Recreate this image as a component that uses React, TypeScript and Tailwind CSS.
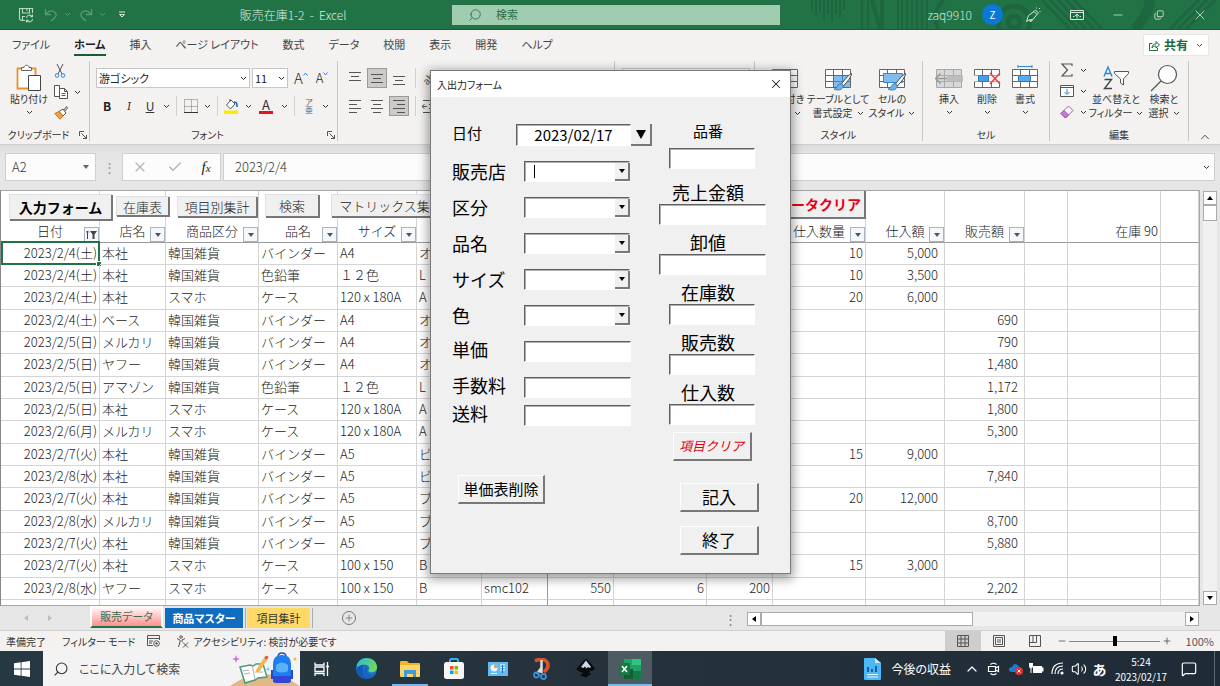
import React from "react";
import {
  Search, X, Check, Minus, Copy, Plus, ChevronUp, Volume2, MessageSquare, Accessibility,
} from "lucide-react";

/* ---------- shared bits ---------- */

const Chev = ({ className = "" }: { className?: string }) => (
  <svg viewBox="0 0 7 5" className={`h-[5px] w-[7px] shrink-0 ${className}`} fill="none" stroke="currentColor">
    <path d="M1 1l2.5 2.5L6 1" />
  </svg>
);

const Launcher = () => (
  <button aria-label="詳細" className="flex w-3 justify-center text-[#555]">
    <svg viewBox="0 0 8 8" className="h-2 w-2" fill="none" stroke="currentColor">
      <path d="M.5 5V.5H5M2.5 2.5l5 5M7.5 4v3.500H4" />
    </svg>
  </button>
);

const Sep = () => <span className="mx-1 h-5 w-px shrink-0 bg-[#d0d0d0]" />;

function Group({ label = "", className, launcher, children }: {
  label?: string; className: string; launcher?: boolean; children?: React.ReactNode;
}) {
  return (
    <section className={`flex h-20 shrink-0 flex-col border-r border-[#c8c6c4] ${className}`}>
      <div className="flex min-h-0 flex-1">{children}</div>
      <div className="flex h-3 items-center text-[10px] leading-3">
        <span className="flex-1 text-center">{label}</span>
        {launcher && <Launcher />}
      </div>
    </section>
  );
}

function BigButton({ icon, lines, className, inline }: {
  icon: React.ReactNode; lines: string[]; className: string; inline?: boolean;
}) {
  return (
    <button className={`flex shrink-0 flex-col items-center pt-1 text-[10px] leading-[14px] ${className}`}>
      <span className="mb-px flex h-[26px] items-center">{icon}</span>
      {lines.map((l, i) => (
        <span key={l} className="flex items-center gap-1 whitespace-nowrap">
          {l}
          {inline && i === lines.length - 1 && <Chev />}
        </span>
      ))}
      {!inline && <Chev className="mt-1" />}
    </button>
  );
}

/* ---------- title bar ---------- */

function TitleBar() {
  return (
    <header className="relative flex h-[30px] shrink-0 items-center border-b border-[#185c37] bg-[#217346] text-[11px] text-[#d3e8dc]">
      <svg className="absolute right-0 top-0 h-[29px] w-[410px]" viewBox="0 0 410 29" fill="none" stroke="#1d6640">
        <path strokeWidth="2" d="M2 0v12M6 0v16M10 0v12M14 0v20M18 0v14M22 0v22M26 0v14M30 0v18M34 0v10M52 0v29M58 0v29M88 0v29M92 0v29M97 0v29M102 0v29M107 0v29M112 0v29M117 0v29" />
        <path strokeWidth="4" d="M62 0l8 29M72 0v29M128 29a24 24 0 0 1 6-29" />
        <circle cx="204" cy="22" r="6" strokeWidth="5" />
        <circle cx="204" cy="22" r="16" strokeWidth="5" />
        <path strokeWidth="3" d="M232 0l28 29M240 0l28 29M248 0l28 29M256 0l28 29M264 0l28 29M360 29l29-29M368 29l29-29M376 29l29-29" />
        <path strokeWidth="10" d="M340 0q-2 18-16 29" />
      </svg>
      <div className="relative flex flex-1 items-center pl-3">
        <button aria-label="上書き保存" className="ml-1.5 w-4">
          <svg viewBox="0 0 16 16" className="h-4 w-4" fill="none" stroke="#b5dbc5" strokeWidth="1.100">
            <path d="M7 13.500H3L1.500 12V1.500h13V6M4.500 1.500V6h7V1.500M4.500 13.500V9.500H7M9 1.500V4" />
            <path d="M8.500 11a3 3 0 0 1 5.500-1.500M14.500 7.500v2.300h-2.300M14.500 12a3 3 0 0 1-5.500 1.500M8.500 15.500v-2.300h2.300" />
          </svg>
        </button>
        <button aria-label="元に戻す" className="ml-2.5 flex items-center gap-1.5 text-[#5b9a78]">
          <svg viewBox="0 0 14 14" className="h-3.5 w-3.5" fill="none" stroke="currentColor" strokeWidth="1.300"><path d="M1.500 1v5.500H7M2 6C4 3.500 7 2 10 3.500c3 2 2.500 4.500.5 6.500L7 13" /></svg>
          <Chev />
        </button>
        <button aria-label="やり直し" className="ml-2 flex items-center gap-1.5 text-[#5b9a78]">
          <svg viewBox="0 0 14 14" className="h-3.5 w-3.5 -scale-x-100" fill="none" stroke="currentColor" strokeWidth="1.300"><path d="M1.500 1v5.500H7M2 6C4 3.500 7 2 10 3.500c3 2 2.500 4.500.5 6.500L7 13" /></svg>
          <Chev />
        </button>
        <button aria-label="クイック アクセス ツール バーのユーザー設定" className="ml-3 text-[#d3e8dc]">
          <svg viewBox="0 0 8 8" className="h-2 w-2" fill="none" stroke="currentColor"><path d="M1 1h6M1.500 3.500h5L4 6z" /></svg>
        </button>
        <h1 className="flex-1 pl-7 text-center text-[12px] font-light text-[#dcefe4]">販売在庫1-2&nbsp; -&nbsp; Excel</h1>
      </div>
      <label className="relative mx-5 flex h-5 w-[328px] items-center bg-[#a0cdb0] text-[#2c6e4a]">
        <Search className="ml-4 h-3.5 w-3.5 -scale-x-100" strokeWidth={1.500} />
        <input aria-label="検索" placeholder="検索" className="ml-3.5 w-40 bg-transparent text-[11px] outline-none placeholder:text-[#2c6e4a]" />
      </label>
      <div className="relative flex flex-1 items-center justify-end">
        <span className="mr-2.5 text-[12px] font-light">zaq9910</span>
        <span className="mr-4 flex h-[21px] w-[21px] items-center justify-center rounded-full bg-[#0b78d4] text-[10px] text-white">Z</span>
        <button aria-label="近日公開の機能" className="flex w-7 justify-center">
          <svg viewBox="0 0 16 16" className="h-4 w-4" fill="none" stroke="currentColor"><path d="M1.500 14.500l2-6L9 4.500 12 7.500 8 12.500l-4 .500zM9 4.500l1.500-1.500 3 3L12 7.500M11.500.500v1M15 1l-1 1M15.500 4.500h-1M5 12.500v2l2-.5v-1.500" /></svg>
        </button>
        <button aria-label="リボンの表示オプション" className="ml-2.5 flex w-10 justify-center">
          <svg viewBox="0 0 14 10" className="h-2.5 w-3.5" fill="none" stroke="currentColor"><path d="M.5.5h13v9H.5zM.5 2.500h13M7 8.500V4M5 6l2-2 2 2M3 6.500h1.500M9.500 6.500H11" /></svg>
        </button>
        <button aria-label="最小化" className="flex w-[41px] justify-center"><Minus className="h-3.5 w-3.5" strokeWidth={1.300} /></button>
        <button aria-label="元に戻す (縮小)" className="flex w-[41px] justify-center"><Copy className="h-2.5 w-2.5 -scale-y-100" strokeWidth={2} /></button>
        <button aria-label="閉じる" className="flex w-[41px] justify-center"><X className="h-4 w-4" strokeWidth={1.300} /></button>
      </div>
    </header>
  );
}

/* ---------- ribbon ---------- */

const TABS = ["ファイル", "ホーム", "挿入", "ページ レイアウト", "数式", "データ", "校閲", "表示", "開発", "ヘルプ"];

function TabStrip() {
  return (
    <nav className="flex h-[30px] shrink-0 items-center text-[11px] text-[#444]">
      {TABS.map((t) =>
        t === "ホーム" ? (
          <a key={t} href="#home" className="mx-3 border-b-2 border-[#185c37] font-bold leading-5 text-[#222]">{t}</a>
        ) : (
          <a key={t} href="#tab" className="mx-3 border-b-2 border-transparent leading-5">{t}</a>
        )
      )}
      <button className="ml-auto mr-3 flex h-5 w-16 items-center justify-center gap-1 whitespace-nowrap bg-white text-[12px] font-bold text-[#1b6b3e] shadow-[0_0_1px_#aaa]">
        <svg viewBox="0 0 11 11" className="h-[11px] w-[11px]" fill="none" stroke="currentColor"><path d="M3.500 3.500h-3v7h8V8M3 8c0-3 2-4 4-4V1.500L10.500 5 7 8V6C5 6 4 6.500 3 8z" /></svg>
        共有
        <Chev className="ml-1" />
      </button>
    </nav>
  );
}

const AlignIcon = ({ d }: { d: string }) => (
  <svg viewBox="0 0 14 14" className="h-3.5 w-3.5" fill="none" stroke="#555"><path d={d} /></svg>
);

function AlignButton({ d, name, on }: { d: string; name: string; on?: boolean }) {
  return (
    <button aria-label={name} className={`flex h-5 w-5 items-center justify-center border ${on ? "border-[#9a9a9a] bg-[#cdcbc9]" : "border-transparent"}`}>
      <AlignIcon d={d} />
    </button>
  );
}

const GridBase = ({ children, dim }: { children?: React.ReactNode; dim?: boolean }) => (
  <svg viewBox="0 0 28 26" className="h-[26px] w-7" fill="none">
    <path d="M1.500 4.500h25v18h-25z" fill={dim ? "#d8d8d8" : "#fff"} stroke={dim ? "#a8a8a8" : "#666"} />
    <path d="M1.500 10.500h25M1.500 16.500h25M9.500 4.500v18M18.500 4.500v18" stroke={dim ? "#a8a8a8" : "#666"} />
    {children}
  </svg>
);

const Brush = () => (
  <>
    <path d="M27.500 8.500Q24 10 17.500 19l2 2Q26 14 28 9z" fill="#fff" stroke="#444" />
    <path d="M17 18.500c-3 0-3.500 3-5 4.500-1 1-2 1-2 1 4 2 8.500 1 9.500-3z" fill="#6db2ee" stroke="#1f6db0" strokeWidth=".8" />
  </>
);

function Ribbon() {
  return (
    <div className="flex h-[84px] shrink-0 pt-px text-[#333]">
      <Group label="クリップボード" className="w-[90px]" launcher>
        <BigButton
          className="w-[54px] pl-1"
          lines={["貼り付け"]}
          icon={
            <svg viewBox="0 0 26 28" className="h-7 w-[26px]" fill="none">
              <path d="M1.500 4.500h18v20h-18z" fill="#fff" stroke="#e8912d" strokeWidth="1.800" />
              <path d="M5.500 6.500v-3h2.500c0-3 5-3 5 0h2.500v3z" fill="#fff" stroke="#666" />
              <path d="M12.500 11.500h12v15h-12z" fill="#fff" stroke="#444" />
            </svg>
          }
        />
        <div className="flex flex-col gap-[7px] pt-[3px]">
          <button aria-label="切り取り">
            <svg viewBox="0 0 12 14" className="h-3.5 w-3" fill="none"><path d="M3 0l5 10M9 0L4 10" stroke="#555" /><circle cx="3" cy="11.500" r="1.800" stroke="#2b88d8" /><circle cx="9" cy="11.500" r="1.800" stroke="#2b88d8" /></svg>
          </button>
          <button aria-label="コピー" className="flex items-center gap-1.5">
            <svg viewBox="0 0 14 14" className="h-3.5 w-3.5" fill="#fff" stroke="#555"><path d="M.5.5h5v11h-5zM5.500 3.500h5l3 3v7h-8zM10.500 3.500v3h3M7.500 8.500h4M7.500 10.500h4" /></svg>
            <Chev />
          </button>
          <button aria-label="書式のコピー/貼り付け">
            <svg viewBox="0 0 14 14" className="h-3.5 w-3.5" fill="none"><path d="M9 5l3.500-4.500L13.500 2 10 6z" stroke="#555" /><path d="M5 5.500l4-2.500 3 4-3 3z" fill="#fff" stroke="#555" /><path d="M5 5.500L.8 7.500 6 13.200l3-3.200z" fill="#f0a040" stroke="#d07818" /></svg>
          </button>
        </div>
      </Group>

      <Group label="フォント" className="w-[248px]" launcher>
        <div className="flex flex-col pl-1.5 pt-[7px]">
          <div className="flex h-5 items-center text-[11px] text-[#222]">
            <button aria-label="フォント名" className="flex h-5 w-[154px] items-center justify-between border border-[#c8c6c4] bg-white px-0.5">游ゴシック<Chev /></button>
            <button aria-label="フォント サイズ" className="ml-0.5 flex h-5 w-9 items-center justify-between border border-[#c8c6c4] bg-white px-0.5">11<Chev /></button>
            <button aria-label="フォント サイズの拡大" className="ml-1.5 flex items-start text-[15px] font-light leading-5">A<svg viewBox="0 0 5 4" className="mt-1 h-1 w-[5px]" fill="none" stroke="#2b88d8"><path d="M.5 3.500l2-2.500 2 2.500" /></svg></button>
            <button aria-label="フォント サイズの縮小" className="ml-2 flex items-start text-[13px] font-light leading-5">A<svg viewBox="0 0 5 4" className="mt-1 h-1 w-[5px]" fill="none" stroke="#2b88d8"><path d="M.5.5l2 2.500 2-2.500" /></svg></button>
          </div>
          <div className="mt-2 flex h-5 items-center text-[12px]">
            <button className="w-[22px] font-bold text-[#222]">B</button>
            <button className="w-[22px] font-serif italic">I</button>
            <button className="w-5 underline">U</button>
            <button aria-label="下線の種類" className="flex w-3 justify-center"><Chev /></button>
            <Sep />
            <button aria-label="罫線" className="flex w-5 justify-center">
              <svg viewBox="0 0 14 14" className="h-3.5 w-3.5" fill="none" stroke="#777"><path d="M.5.5h13v13H.5zM7.500 .5v13M.5 7.500h13" strokeDasharray="1 1" /><path d="M0 13.500h14" stroke="#333" /></svg>
            </button>
            <button aria-label="罫線の種類" className="flex w-3 justify-center"><Chev /></button>
            <Sep />
            <button aria-label="塗りつぶしの色" className="flex w-5 justify-center">
              <svg viewBox="0 0 16 16" className="h-4 w-4" fill="none"><path d="M0 12.500h14V16H0z" fill="#ffeb00" /><path d="M2.500 7L7 2l4 4-4.500 5zM6 3.500V1" stroke="#555" fill="#fff" /><path d="M10 4c3 0 3 2 3 5" stroke="#1d5fa8" strokeWidth="1.500" /></svg>
            </button>
            <button aria-label="塗りつぶしの色の一覧" className="flex w-3 justify-center"><Chev /></button>
            <button aria-label="フォントの色" className="flex w-6 flex-col items-center text-[13px] leading-[13px]">A<span className="h-[3px] w-3.5 bg-[#e81123]" /></button>
            <button aria-label="フォントの色の一覧" className="flex w-3 justify-center"><Chev /></button>
            <Sep />
            <button aria-label="ふりがなの表示" className="flex w-5 flex-col items-center text-[8px] leading-2 text-[#666]"><span>ア</span><span>亜</span></button>
            <button aria-label="ふりがなの設定" className="flex w-3 justify-center"><Chev /></button>
          </div>
        </div>
      </Group>

      <Group className="w-[277px]">
        <div className="flex flex-col gap-2 pl-[7px] pt-[7px]">
          <div className="flex h-5 items-center gap-0.5">
            <AlignButton name="上揃え" d="M1 1.500h12M3 5.500h8M1 9.500h12" />
            <AlignButton name="上下中央揃え" on d="M1 3.500h12M3 7.500h8M1 11.500h12" />
            <AlignButton name="下揃え" d="M1 5.500h12M3 9.500h8M1 13.500h12" />
            <Sep />
            <button aria-label="方向" className="-rotate-45 text-[10px] text-[#555]">ab</button>
          </div>
          <div className="flex h-5 items-center gap-0.5">
            <AlignButton name="左揃え" d="M1 1.500h12M1 5.500h8M1 9.500h12M1 13.500h8" />
            <AlignButton name="中央揃え" d="M1 1.500h12M3 5.500h8M1 9.500h12M3 13.500h8" />
            <AlignButton name="右揃え" on d="M1 1.500h12M5 5.500h8M1 9.500h12M5 13.500h8" />
            <Sep />
            <AlignIcon d="M1 1.500h12M7 5.500h6M7 9.500h6M1 13.500h12M5 7.500H0M2.500 5L0 7.500 2.500 10" />
          </div>
        </div>
      </Group>

      <Group className="w-[140px]">
        <div className="p-[7px]"><div className="h-5 w-32 border border-[#c8c6c4] bg-white" /></div>
      </Group>

      <Group label="スタイル" className="w-[168px]">
        <BigButton className="w-[60px]" inline lines={["条件付き", "書式"]} icon={<GridBase><path d="M2 4h16v6H2z" fill="#e84c4c" /><path d="M2 11h12v5H2z" fill="#8cc4ee" /></GridBase>} />
        <BigButton className="w-[46px]" inline lines={["テーブルとして", "書式設定"]} icon={<GridBase><path d="M10 11h16v11H10z" fill="#83bdf0" /><path d="M10 16.500h16M18.500 11v11" stroke="#3a86c8" /><Brush /></GridBase>} />
        <BigButton className="w-[62px]" inline lines={["セルの", "スタイル"]} icon={<GridBase><path d="M5.500 8.500h19v9h-19z" fill="#83bdf0" stroke="#3a86c8" /><Brush /></GridBase>} />
      </Group>

      <Group label="セル" className="w-[127px]">
        <BigButton className="ml-[7px] w-[38px]" lines={["挿入"]} icon={<GridBase dim><path d="M12 10.500h16v6H12z" fill="#bdbdbd" /><path d="M12 13.500H1M5.500 8.500l-5 5 5 5" stroke="#999" strokeWidth="1.500" /></GridBase>} />
        <BigButton className="w-[38px]" lines={["削除"]} icon={<GridBase><path d="M0 10.500h28v6H0z" fill="#f3f2f1" /><path d="M5.500 10.500h10v6h-10z" fill="#4a9ee8" stroke="#2d79bd" /><path d="M17 8l10 11M27 8L17 19" stroke="#e84040" strokeWidth="1.500" /></GridBase>} />
        <BigButton className="w-[38px]" lines={["書式"]} icon={<GridBase><path d="M7.500 10.500h12v6h-12z" fill="#5aa8ec" stroke="#2d79bd" /><path d="M7 1.500h14M7 0v3M21 0v3" stroke="#2b88d8" /></GridBase>} />
      </Group>

      <Group label="編集" className="w-[139px]">
        <div className="flex w-[38px] flex-col gap-[7px] pl-2.5 pt-0.5">
          <button aria-label="オート SUM" className="flex items-center gap-1.5">
            <svg viewBox="0 0 14 14" className="h-3.5 w-3.5 shrink-0" fill="none" stroke="#555" strokeWidth="1.200"><path d="M12 3V1H2l5.500 6L2 13h10v-2" /></svg><Chev />
          </button>
          <button aria-label="フィル" className="flex items-center gap-1.5">
            <svg viewBox="0 0 14 14" className="h-3.5 w-3.5 shrink-0" fill="#fff" stroke="#555"><path d="M.5 1.500h13v11H.5zM.5 3.500h13" /><path d="M7 5v5M4.500 8L7 10.500 9.500 8" stroke="#2b88d8" fill="none" /></svg><Chev />
          </button>
          <button aria-label="クリア" className="flex items-center gap-1.5">
            <svg viewBox="0 0 14 14" className="h-3.5 w-3.5 shrink-0"><path d="M1 8.500L8.500 1 13 5.500 5.500 13z" fill="#fff" stroke="#a34fb0" /><path d="M1 8.500L4 5.500 8.500 10l-3 3z" fill="#c87ad4" stroke="#a34fb0" /></svg><Chev />
          </button>
        </div>
        <BigButton className="w-14" inline lines={["並べ替えと", "フィルター"]} icon={
          <svg viewBox="0 0 26 26" className="h-[26px] w-[26px]" fill="none">
            <path d="M1 11.500L5 2l4 9.500M2.500 8.500h5" stroke="#2b88d8" strokeWidth="1.400" />
            <path d="M1.500 14.500h7l-7 9h7.500" stroke="#444" strokeWidth="1.400" />
            <path d="M11.500 6.500h14v2l-5 5.500v6l-3 -2v-4l-6-5.500z" stroke="#555" fill="#fff" />
          </svg>} />
        <BigButton className="w-10" inline lines={["検索と", "選択"]} icon={
          <svg viewBox="0 0 28 28" className="h-7 w-7" fill="none" stroke="#555" strokeWidth="1.200"><circle cx="17.500" cy="10.500" r="9" fill="#fff" /><path d="M11 17L1 27" /></svg>} />
      </Group>
      <button aria-label="リボンを折りたたむ" className="flex flex-1 items-end justify-center"><ChevronUp className="h-3.5 w-3.5" strokeWidth={1.500} /></button>
    </div>
  );
}

/* ---------- formula bar ---------- */

function FormulaBar() {
  return (
    <div className="flex h-[46px] shrink-0 items-start border-t border-[#cfcfcf] bg-gradient-to-b from-[#dcdcdc] to-[#e6e6e6] to-20% px-[5px] pt-2 text-[13px] font-light text-[#333]">
      <button aria-label="名前ボックス" className="flex h-7 w-[91px] items-center justify-between border border-[#cfcfcf] bg-[#fcfcfc] px-1.5">
        A2
        <svg viewBox="0 0 6 4" className="h-1 w-1.5"><path d="M0 0h6L3 4z" fill="#666" /></svg>
      </button>
      <span className="flex h-7 w-[26px] items-center justify-center text-[#999]">⋮</span>
      <div className="flex h-7 w-[99px] items-center justify-around border border-[#cfcfcf] bg-[#fcfcfc]">
        <button aria-label="キャンセル"><X className="h-4 w-4 text-[#b5b5b5]" strokeWidth={1.800} /></button>
        <button aria-label="入力"><Check className="h-4 w-4 text-[#b5b5b5]" strokeWidth={2.200} /></button>
        <button aria-label="関数の挿入" className="font-['Liberation_Serif',serif] text-[15px] font-normal italic text-[#222]">f<span className="text-[11px]">x</span></button>
      </div>
      <div className="ml-0.5 flex h-7 flex-1 items-center border border-[#cfcfcf] bg-[#fcfcfc] pl-[11px] pr-1">
        <input aria-label="数式バー" defaultValue="2023/2/4" className="flex-1 bg-transparent outline-none" />
        <Chev />
      </div>
    </div>
  );
}

/* ---------- worksheet ---------- */

const COLS = [
  { w: "w-[99px]", h: "日付", f: "sorted" },
  { w: "w-[66px]", h: "店名", f: "menu" },
  { w: "w-[93px]", h: "商品区分", f: "menu" },
  { w: "w-[79px]", h: "品名", f: "menu" },
  { w: "w-[79px]", h: "サイズ", f: "menu" },
  { w: "w-[65px]", h: "", f: "" },
  { w: "w-[66px]", h: "", f: "" },
  { w: "w-[66px]", h: "", f: "" },
  { w: "w-[93px]", h: "", f: "" },
  { w: "w-[66px]", h: "", f: "" },
  { w: "w-[93px]", h: "仕入数量", f: "menu" },
  { w: "w-[79px]", h: "仕入額", f: "menu" },
  { w: "w-[80px]", h: "販売額", f: "menu" },
  { w: "w-[43px]", h: "", f: "" },
  { w: "w-[93px]", h: "在庫 90", f: "" },
  { w: "w-auto", h: "", f: "" },
];

const KB = "韓国雑貨";
const ROWS: string[][] = [
  ["2023/2/4(土)", "本社", KB, "バインダー", "A4", "オ", "", "", "", "", "10", "5,000", ""],
  ["2023/2/4(土)", "本社", KB, "色鉛筆", "１２色", "L", "", "", "", "", "10", "3,500", ""],
  ["2023/2/4(土)", "本社", "スマホ", "ケース", "120 x 180A", "A", "", "", "", "", "20", "6,000", ""],
  ["2023/2/4(土)", "ベース", KB, "バインダー", "A4", "オ", "", "", "", "", "", "", "690"],
  ["2023/2/5(日)", "メルカリ", KB, "バインダー", "A4", "オ", "", "", "", "", "", "", "790"],
  ["2023/2/5(日)", "ヤフー", KB, "バインダー", "A4", "オ", "", "", "", "", "", "", "1,480"],
  ["2023/2/5(日)", "アマゾン", KB, "色鉛筆", "１２色", "L", "", "", "", "", "", "", "1,172"],
  ["2023/2/5(日)", "本社", "スマホ", "ケース", "120 x 180A", "A", "", "", "", "", "", "", "1,800"],
  ["2023/2/6(月)", "メルカリ", "スマホ", "ケース", "120 x 180A", "A", "", "", "", "", "", "", "5,300"],
  ["2023/2/7(火)", "本社", KB, "バインダー", "A5", "ビ", "", "", "", "", "15", "9,000", ""],
  ["2023/2/8(水)", "本社", KB, "バインダー", "A5", "ビ", "", "", "", "", "", "", "7,840"],
  ["2023/2/7(火)", "本社", KB, "バインダー", "A5", "ブ", "", "", "", "", "20", "12,000", ""],
  ["2023/2/8(水)", "メルカリ", KB, "バインダー", "A5", "ブ", "", "", "", "", "", "", "8,700"],
  ["2023/2/7(火)", "本社", KB, "バインダー", "A5", "ブ", "", "", "", "", "", "", "5,880"],
  ["2023/2/7(火)", "本社", "スマホ", "ケース", "100 x 150", "B", "", "", "", "", "15", "3,000", ""],
  ["2023/2/8(水)", "ヤフー", "スマホ", "ケース", "100 x 150", "B", "smc102", "550", "6", "200", "", "", "2,202"],
  [],
];

function cellAlign(c: number) {
  if (c === 0) return "text-right pr-0.5";
  if (c === 11 || c === 12) return "text-right pr-1.5";
  if (c >= 7) return "text-right pr-0.5";
  return "pl-0.5";
}

const FilterButton = ({ kind, name }: { kind: string; name: string }) => (
  <button aria-label={`${name} フィルター`} className="absolute bottom-0 right-0 flex h-[15px] w-[15px] items-center justify-center border border-[#a9b4c2] bg-[#f4f7fb]">
    {kind === "sorted" ? (
      <svg viewBox="0 0 11 9" className="h-[9px] w-[11px]"><path d="M1.500 9V1M0 2.500L1.500 1 3 2.500" stroke="#444" fill="none" /><path d="M4 1h7L8.500 4.500V9h-2V4.500z" fill="#444" /></svg>
    ) : (
      <svg viewBox="0 0 6 4" className="h-1 w-1.5"><path d="M0 0h6L3 4z" fill="#555" /></svg>
    )}
  </button>
);

function MacroButton({ className, children }: { className: string; children: React.ReactNode }) {
  return (
    <button className={`shrink-0 overflow-hidden whitespace-nowrap border-b-2 border-r-2 border-[#777] bg-[#f0f0f0] text-center shadow-[-1px_-1px_0_#e0e0e0] ${className}`}>
      {children}
    </button>
  );
}

const ArrowBox = ({ d, name, className = "" }: { d: string; name: string; className?: string }) => (
  <button aria-label={name} className={`flex h-3.5 w-3.5 shrink-0 items-center justify-center border border-[#aaa] bg-white ${className}`}>
    <svg viewBox="0 0 6 6" className="h-1.5 w-1.5"><path d={d} fill="#000" /></svg>
  </button>
);

function Sheet() {
  return (
    <main className="flex min-h-0 flex-1 bg-[#e6e6e6]">
      <div className="relative min-w-0 flex-1 overflow-hidden border border-[#a6a6a6] border-l-[#888] bg-white">
        <table className="w-full table-fixed border-separate border-spacing-0 text-[13px] font-light leading-4 text-[#222]">
          <colgroup>{COLS.map((c, i) => <col key={i} className={c.w} />)}</colgroup>
          <thead>
            <tr className="h-[52px]">
              {COLS.map((c, i) => (
                <th key={i} className={`relative whitespace-nowrap border-b border-r border-b-[#9a9a9a] p-0 pb-[3px] align-bottom font-light ${i === 6 ? "border-r-[#9a9a9a]" : "border-r-[#d4d4d4]"} ${i === 14 ? "pr-0.5 text-right" : "text-center"}`}>
                  {c.h}
                  {c.f && <FilterButton kind={c.f} name={c.h} />}
                </th>
              ))}
            </tr>
          </thead>
          <tbody className="[&>tr:nth-child(3n)]:h-[23px]">
            {ROWS.map((r, ri) => (
              <tr key={ri} className="h-[22px]">
                {COLS.map((_, ci) => (
                  <td key={ci} className={`relative overflow-visible whitespace-nowrap border-b border-r border-b-[#d4d4d4] pt-0 pb-0.5 ${ci === 6 ? "border-r-[#9a9a9a]" : "border-r-[#d4d4d4]"} ${cellAlign(ci)}`}>
                    {r[ci] ?? ""}
                    {ri === 0 && ci === 0 && (
                      <span className="pointer-events-none absolute -top-0.5 -bottom-px -right-px left-0 border-2 border-[#217346]">
                        <span className="absolute -bottom-[3px] -right-[3px] h-[5px] w-[5px] border-l border-t border-white bg-[#217346]" />
                      </span>
                    )}
                  </td>
                ))}
              </tr>
            ))}
          </tbody>
        </table>
        <div className="absolute left-[9px] top-0 flex items-start text-[14px] font-light leading-[19px] text-[#222]">
          <MacroButton className="mt-1 h-[26px] w-[103px] text-[14px] font-bold leading-6 text-black">入力フォーム</MacroButton>
          <MacroButton className="ml-1 mt-1.5 h-5 w-[53px] text-[13px]">在庫表</MacroButton>
          <MacroButton className="ml-2 mt-1.5 h-[21px] w-[80px] text-[13px]">項目別集計</MacroButton>
          <MacroButton className="ml-2 mt-1 h-[23px] w-[54px] text-[13px]">検索</MacroButton>
          <MacroButton className="ml-3 mt-1 h-[23px] w-[120px] text-[13px]">マトリックス集計</MacroButton>
          <MacroButton className="ml-[314px] h-7 w-[100px] pl-2 text-[14px] font-bold leading-6 text-[#e60012]">データクリア</MacroButton>
        </div>
      </div>
      <div className="flex w-5 flex-col items-center py-px">
        <ArrowBox name="上へスクロール" d="M0 5h6L3 1z" />
        <span className="h-4 w-3.5 border border-[#aaa] bg-white" />
        <span className="w-3.5 flex-1 bg-[#f1f1f1]" />
        <ArrowBox name="下へスクロール" d="M0 1h6L3 5z" />
      </div>
    </main>
  );
}

function SheetTabs() {
  return (
    <div className="flex h-[25px] shrink-0 items-start border-b border-[#d0d0d0] bg-[#e6e6e6] text-[11px]">
      <div className="flex h-6 w-[90px] items-center gap-5 pl-6 text-[#bbb]">
        <svg viewBox="0 0 4 6" className="h-1.5 w-1"><path d="M4 0v6L0 3z" fill="currentColor" /></svg>
        <svg viewBox="0 0 4 6" className="h-1.5 w-1"><path d="M0 0v6l4-3z" fill="currentColor" /></svg>
      </div>
      <button className="h-[22px] w-[73px] border-x-2 border-b-2 border-x-white border-b-[#217346] bg-gradient-to-b from-white to-[#ff8f8f] text-[#3f6b50]">販売データ</button>
      <button className="ml-0.5 mt-0.5 h-5 w-[78px] whitespace-nowrap bg-[#0f6cbf] font-bold text-white">商品マスター</button>
      <span className="ml-0.5 mt-0.5 h-5 w-px bg-[#aaa]" />
      <button className="ml-px mt-0.5 h-5 w-[63px] bg-[#ffd966] text-[#333]">項目集計</button>
      <span className="ml-0.5 mt-0.5 h-5 w-px bg-[#aaa]" />
      <button aria-label="新しいシート" className="ml-[29px] mt-[5px] flex h-3.5 w-3.5 items-center justify-center rounded-full border border-[#777] text-[#777]"><Plus className="h-2.5 w-2.5" strokeWidth={2} /></button>
      <div className="ml-auto flex h-[26px] items-center">
        <span className="mr-[10px] text-[13px] text-[#888]">⋮</span>
        <ArrowBox name="左へスクロール" d="M5 0v6L1 3z" />
        <span className="h-3.5 w-[212px] border border-[#aaa] bg-white" />
        <span className="h-3.5 w-[212px] bg-[#f1f1f1]" />
        <ArrowBox name="右へスクロール" d="M1 0v6l4-3z" className="mr-[21px]" />
      </div>
    </div>
  );
}

/* ---------- status bar ---------- */

function StatusBar() {
  return (
    <div className="flex h-5 shrink-0 items-center whitespace-nowrap bg-[#f3f2f1] pl-1.5 text-[10px] text-[#333]">
      <span>準備完了</span>
      <span className="ml-4">フィルター モード</span>
      <svg viewBox="0 0 13 12" className="ml-3 h-3 w-[13px]" fill="none" stroke="#555"><path d="M6 10.500H.5V.5h12V5M.5 3.500h12M2 6h4M2 8h3" /><circle cx="9.500" cy="8.500" r="2.800" /><circle cx="9.500" cy="8.500" r=".8" fill="#555" /></svg>
      <svg viewBox="0 0 13 13" className="ml-4 h-[13px] w-[13px]" fill="none" stroke="#555"><circle cx="5" cy="2" r="1.300" /><path d="M1 3.500l3 1.500v2L2.500 12M9 3.500L6 5v2M5 8v0M7 7.500l5 5M12 7.500l-5 5" /></svg>
      <span className="ml-1">アクセシビリティ: 検討が必要です</span>
      <div className="ml-auto flex h-5 items-center text-[#555]">
        <button aria-label="標準" className="flex h-5 w-9 items-center justify-center bg-[#d0cecc]">
          <svg viewBox="0 0 12 12" className="h-3 w-3" fill="none" stroke="currentColor"><path d="M.5.5h11v11H.5zM4 .5v11M8 .5v11M.5 4h11M.5 8h11" /></svg>
        </button>
        <button aria-label="ページ レイアウト" className="flex w-9 justify-center">
          <svg viewBox="0 0 12 12" className="h-3 w-3" fill="none" stroke="currentColor"><path d="M.5.5h11v11H.5zM2.500 2.500h7v7h-7zM4 5h4M4 7h4" /></svg>
        </button>
        <button aria-label="改ページ プレビュー" className="flex w-9 justify-center">
          <svg viewBox="0 0 12 12" className="h-3 w-3" fill="none" stroke="currentColor"><path d="M.5.5h11v11H.5zM.5 7.500h7v-7M4 .5v7" /></svg>
        </button>
        <button aria-label="縮小" className="ml-1 flex w-2.5 justify-center"><Minus className="h-2.5 w-2.5" strokeWidth={2} /></button>
        <input aria-label="ズーム" type="range" min={0} max={200} defaultValue={100} className="mx-0.5 h-4 w-[91px] appearance-none bg-transparent [&::-webkit-slider-runnable-track]:h-px [&::-webkit-slider-runnable-track]:bg-[#888] [&::-webkit-slider-thumb]:-mt-[5px] [&::-webkit-slider-thumb]:h-2.5 [&::-webkit-slider-thumb]:w-1 [&::-webkit-slider-thumb]:appearance-none [&::-webkit-slider-thumb]:bg-black" />
        <button aria-label="拡大" className="flex w-2.5 justify-center"><Plus className="h-2.5 w-2.5 shrink-0" strokeWidth={2} /></button>
        <span className="w-12 pr-1.5 text-right text-[11px]">100%</span>
      </div>
    </div>
  );
}

/* ---------- taskbar ---------- */

function TaskItem({ name, children, state = "" }: { name: string; children: React.ReactNode; state?: string }) {
  return (
    <button aria-label={name} className={`flex h-full w-11 shrink-0 items-center justify-center ${state === "active" ? "border-b-2 border-[#76b9ed] bg-[#4d5b62] pt-0.5" : ""}`}>
      {state === "running" ? (
        <span className="flex h-full w-9 items-center justify-center border-b-2 border-[#76b9ed] pt-0.5">{children}</span>
      ) : children}
    </button>
  );
}

function Taskbar() {
  return (
    <footer className="flex h-[35px] shrink-0 items-center bg-gradient-to-r from-[#253942] via-[#26323b] to-[#1e2b36] text-white">
      <button aria-label="スタート" className="flex h-full w-[43px] items-center justify-center">
        <svg viewBox="0 0 16 16" className="h-4 w-4" fill="#fff"><path d="M0 2.200L6.700 1.300v6.300H0zM7.500 1.200L16 0v7.600H7.500zM0 8.400h6.700v6.300L0 13.800zM7.500 8.400H16V16l-8.500-1.200z" /></svg>
      </button>
      <label className="flex h-full w-[257px] items-center bg-[#f3f3f3] text-[#333]">
        <Search className="ml-2.5 h-4 w-4 -scale-x-100" strokeWidth={1.600} />
        <input aria-label="ここに入力して検索" placeholder="ここに入力して検索" className="ml-2.5 w-[140px] bg-transparent text-[12px] outline-none placeholder:text-[#444]" />
        <svg viewBox="0 0 70 34" className="ml-auto h-[34px] w-[70px]">
          <path d="M0 34q34-24 70 0z" fill="#e3b887" />
          <path d="M6 3l1 3 3 1-3 1-1 3-1-3-3-1 3-1z" fill="#d46be6" />
          <path d="M10 15l10-2 3 1 3-2 7 0 4 13-9 1-3 2-10 3z" fill="#fff" stroke="#4a9a78" strokeWidth="1.500" />
          <path d="M22 13l3 14M13 19l6-1M14 22l6-1M27 17h4M28 20h5" stroke="#999" strokeWidth=".8" />
          <path d="M26 18L34 6l3 2-8 12-4 1z" fill="#f7b548" />
          <path d="M34 6l1.500-2q2-1 3 1L37 8z" fill="#e65c50" />
          <circle cx="38" cy="17" r="1.500" fill="#6fd0f0" /><circle cx="65" cy="7" r="1.500" fill="#f5b53c" />
          <path d="M48 5q0-4 4-4t4 4" fill="none" stroke="#1c4fc0" strokeWidth="1.500" />
          <path d="M43 28V12q0-9 9-9t9 9v16q0 3-3 3H46q-3 0-3-3z" fill="#1f7df0" />
          <path d="M46 13q6-5 12 0v6q-6 3-12 0z" fill="#57b4fa" /><path d="M43 24h18v4q0 3-3 3H46q-3 0-3-3z" fill="#3446d6" /><path d="M41 18h2v9h-2zM61 18h2v9h-2z" fill="#1c4fc0" />
        </svg>
      </label>
      <TaskItem name="タスク ビュー">
        <svg viewBox="0 0 16 14" className="h-3.5 w-4" fill="none" stroke="#fff" strokeWidth="1.300"><path d="M1 .5V3h9V.5M1 5h9v4.500H1zM1 14v-2.500h9V14M13.500 0v14M12 4.500h3" /></svg>
      </TaskItem>
      <TaskItem name="Microsoft Edge">
        <svg viewBox="0 0 24 24" className="h-[23px] w-[23px]">
          <defs><linearGradient id="eg" x1="0" y1="0" x2="1" y2=".4"><stop offset="0" stopColor="#2bb5e6" /><stop offset="1" stopColor="#6ed95a" /></linearGradient></defs>
          <circle cx="12" cy="12" r="11" fill="#1b74cf" />
          <path d="M1.500 10C2.500 4.500 7 1 12 1c6.500 0 11 4.500 11 9.500 0 3.500-2.500 5.500-5.500 5.500-2.500 0-4-1-3.500-2 2-2.500.5-6-3.500-6C6 8 2.500 10.500 1.500 10z" fill="url(#eg)" />
          <path d="M8 14c0 5 4 8.500 8.500 8-6 2.500-14-.5-14.500-8C1.800 10 6 8 10 8c-1.500 1-2 3.500-2 6z" fill="#145ab5" />
          <path d="M12 14c0 2.500 3 4.500 6 4.500 1.500 0 3-.5 4-1.500-1.500 3-4 4.500-5.500 5-5 0-8.500-4-7-9 .5-2 1.500-3 2.500-3 2 1 1 2.500 0 4z" fill="#1666c0" />
        </svg>
      </TaskItem>
      <TaskItem name="エクスプローラー" state="running">
        <svg viewBox="0 0 20 18" className="h-[18px] w-5"><path d="M0 2q0-1 1-1h6l2 2h10q1 0 1 1v12H0z" fill="#f0b429" /><path d="M0 5h20v11q0 1-1 1H1q-1 0-1-1z" fill="#fdd568" /><path d="M4 10h12v7h-3v-3H7v3H4z" fill="#3d9be0" /></svg>
      </TaskItem>
      <TaskItem name="Microsoft Store">
        <svg viewBox="0 0 22 22" className="h-[22px] w-[22px]"><path d="M7 6V2.500Q7 1 8.500 1h5Q15 1 15 2.500V6" fill="none" stroke="#35b4f0" strokeWidth="2" /><rect x="1" y="4" width="20" height="17" rx="2.500" fill="#f7f7f7" /><path d="M7 8h3.500v3.500H7z" fill="#f25022" /><path d="M11.500 8H15v3.500h-3.500z" fill="#7fba00" /><path d="M7 12.500h3.500V16H7z" fill="#00a4ef" /><path d="M11.500 12.500H15V16h-3.500z" fill="#ffb900" /></svg>
      </TaskItem>
      <TaskItem name="コントロール パネル">
        <svg viewBox="0 0 20 14" className="h-3.5 w-5"><path d="M0 0h20v14H0z" fill="#62baf0" /><circle cx="6" cy="6" r="3.500" fill="#e8f6ff" /><path d="M6 6V2.500A3.500 3.500 0 0 1 9.500 6z" fill="#f0a030" /><path d="M12 3h5M12 5.500h5M12 8h5M3 11.500h6" stroke="#fff" /><path d="M14.500 3v8" stroke="#1e6fb8" /></svg>
      </TaskItem>
      <TaskItem name="Snipping Tool">
        <svg viewBox="0 0 20 22" className="h-[22px] w-5" fill="none"><path d="M3 3Q11-1 15 4q3 5-3 10" stroke="#d9532c" strokeWidth="3.500" /><path d="M9.500 2v13M10 9L5 16" stroke="#ddd" strokeWidth="2.500" /><circle cx="4.500" cy="17" r="2.500" stroke="#3b8fd9" strokeWidth="1.800" /><circle cx="11.500" cy="18.500" r="2.500" stroke="#3b8fd9" strokeWidth="1.800" /></svg>
      </TaskItem>
      <TaskItem name="Inkscape">
        <svg viewBox="0 0 20 20" className="h-5 w-5"><path d="M10 0q1.500 0 9 9.500-1 2-5 2.500l-1 2q3 .5 1 2l-2.500 1-1.500 2-2-1.500-3-.5q-1-1.500 2-2.500l-2-1.500Q1 12 .5 10 8.500 0 10 0z" fill="#0a0a0a" /><path d="M10 1.500L5 8l2.500 1L9 7.500l1.500 2L12 8l2 1 1-1z" fill="#c9d6ec" /></svg>
      </TaskItem>
      <TaskItem name="Excel" state="active">
        <svg viewBox="0 0 22 20" className="h-5 w-[22px]"><path d="M5 0h16q1 0 1 1v18q0 1-1 1H5z" fill="#21a366" /><path d="M13 0h8q1 0 1 1v5h-9z" fill="#33c481" /><path d="M5 10h9v10H5z" fill="#185c37" /><path d="M14 12h8v7q0 1-1 1h-7z" fill="#107c41" /><rect y="4" width="11" height="12" rx="1" fill="#107c41" /><path d="M3 7l5 6M8 7l-5 6" stroke="#fff" strokeWidth="1.600" /></svg>
      </TaskItem>

      <div className="ml-auto flex h-full items-center">
        <a href="#news" className="flex items-center whitespace-nowrap text-[12px] text-white">
          <svg viewBox="0 0 17 22" className="mr-2.5 h-[22px] w-[17px]"><path d="M1 0h10l6 5v16q0 1-1 1H1q-1 0-1-1V1q0-1 1-1z" fill="#4cb8f5" /><path d="M11 0l6 5h-6z" fill="#c6e9fd" /><path d="M3 14V9h2v5M7 14v-3h2v3M11 14V8h2v6" fill="#1560a8" /><path d="M3 16.500h11M3 19h11" stroke="#e6f6ff" /></svg>
          今後の収益
        </a>
        <button aria-label="隠れているインジケーター" className="ml-2.5 flex w-[22px] justify-center"><ChevronUp className="h-4 w-4" strokeWidth={1.800} /></button>
        <button aria-label="会議" className="flex w-[22px] justify-center"><svg viewBox="0 0 14 14" className="h-3.5 w-3.5" fill="none" stroke="#fff" strokeWidth="1.200"><path d="M1.500 4.500h7v5h-7zM8.500 6l3-1.500v5L8.500 8M3.500 2.500q3-2.500 6 0M3.500 11.500q3 2.500 6 0" /></svg></button>
        <button aria-label="OneDrive" className="flex w-[21px] justify-center"><svg viewBox="0 0 14 12" className="h-3 w-3.5"><path d="M3 9q-3 0-3-2.500T3 4q1.500-4 5-2.500 2 1 2 3 3 0 3 2.500T10 9z" fill="#1a7bd4" /><circle cx="10" cy="8" r="4" fill="#e03030" /><path d="M8.500 6.500l3 3M11.500 6.500l-3 3" stroke="#fff" /></svg></button>
        <button aria-label="電源" className="flex w-[21px] justify-center"><svg viewBox="0 0 15 12" className="h-3 w-[15px]" fill="#fff"><path d="M4 3h9v1.500h1.500v4H13V10H4z" /><path d="M.5 0v3.500q0 1.500 1.500 1.500t1.500-1.500V0M2 5v5" stroke="#fff" /></svg></button>
        <button aria-label="ネットワーク" className="flex w-[21px] justify-center"><svg viewBox="0 0 13 13" className="h-[13px] w-[13px]" fill="none" stroke="#fff" strokeWidth="1.200"><path d="M1 12Q1 1 12 1M4 12q0-8 8-8M7 12q0-5 5-5" /><circle cx="11" cy="11" r="1" fill="#fff" /></svg></button>
        <button aria-label="音量" className="flex w-[21px] justify-center"><Volume2 className="h-4 w-4" strokeWidth={1.600} /></button>
        <button aria-label="日本語入力" className="w-[21px] text-[14px] font-bold leading-4">あ</button>
        <time className="w-[62px] text-center text-[10px] leading-[15px]">5:24<br />2023/02/17</time>
        <button aria-label="通知" className="flex w-[34px] justify-center"><MessageSquare className="h-4 w-4" strokeWidth={1.800} /></button>
        <span className="ml-2 h-full w-1.5 border-l border-[#5a6a72]" />
      </div>
    </footer>
  );
}

/* ---------- entry form dialog ---------- */

const sunken = "border border-l-[#5f5f5f] border-t-[#5f5f5f] border-b-white border-r-white bg-white shadow-[inset_1px_1px_0_#b0b0b0]";

function Bevel({ className, children }: { className: string; children: React.ReactNode }) {
  return (
    <button type="button" className={`whitespace-nowrap border border-b-2 border-r-2 border-b-[#787878] border-l-white border-r-[#787878] border-t-white bg-[#f0f0f0] ${className}`}>{children}</button>
  );
}

const COMBOS = ["販売店", "区分", "品名", "サイズ", "色"];

const TextRow = ({ label, id, className }: { label: string; id: string; className: string }) => (
  <div className={`flex items-center ${className}`}>
    <label htmlFor={id} className="w-[72px] pb-1">{label}</label>
    <input id={id} className={`h-[21px] w-[107px] text-[13px] ${sunken}`} />
  </div>
);

function EntryForm() {
  return (
    <div role="dialog" aria-label="入出力フォーム" className="absolute left-[430px] top-[70px] flex h-[504px] w-[361px] flex-col border border-[#7a7a7a] bg-[#f0f0f0] text-black shadow-[0_3px_10px_2px_rgba(0,0,0,0.38)]">
      <div className="flex h-[26px] shrink-0 items-center justify-between bg-white pl-1.5 pr-[7px] text-[10px] text-[#222] [font-feature-settings:'palt']">
        入出力フォーム
        <button aria-label="閉じる"><X className="h-3.5 w-3.5" strokeWidth={1.800} /></button>
      </div>
      <form className="flex flex-1 pt-5 text-[18px] leading-[22px]">
        <div className="flex w-[221px] flex-col pl-[21px]">
          <div className="flex h-9 items-center">
            <label htmlFor="date" className="w-16 pb-1 text-[15px]">日付</label>
            <input id="date" defaultValue="2023/02/17" className={`h-[22px] w-[115px] text-center text-[15px] ${sunken}`} />
            <button type="button" aria-label="日付の選択" className="flex h-[22px] w-[21px] items-center justify-center border-b-2 border-r-2 border-[#787878] bg-[#f0f0f0]">
              <svg viewBox="0 0 10 9" className="h-[9px] w-2.5"><path d="M0 0h10L5 9z" /></svg>
            </button>
          </div>
          {COMBOS.map((c, i) => (
            <div key={c} className="flex h-9 items-center">
              <label htmlFor={`combo-${i}`} className="w-[72px]">{c}</label>
              <span className="relative">
                <select id={`combo-${i}`} className={`block h-[21px] w-[106px] appearance-none text-[13px] outline-none ${sunken}`}><option></option></select>
                <span className="pointer-events-none absolute bottom-px right-0 top-0.5 flex w-[15px] items-center justify-center border-b-2 border-r-2 border-[#787878] bg-[#f0f0f0]">
                  <svg viewBox="0 0 6 4" className="h-1 w-1.5"><path d="M0 0h6L3 4z" /></svg>
                </span>
                {i === 0 && <span className="pointer-events-none absolute bottom-1 left-2.5 top-1 w-px bg-black" />}
              </span>
            </div>
          ))}
          <TextRow label="単価" id="price" className="h-9" />
          <TextRow label="手数料" id="fee" className="h-9" />
          <TextRow label="送料" id="postage" className="h-5" />
          <Bevel className="ml-1.5 mt-[50px] h-[29px] w-[87px] text-[15px]">単価表削除</Bevel>
        </div>

        <div className="flex w-[110px] flex-col items-center pl-2.5 pt-[3px]">
          <label htmlFor="code" className="pr-2 text-[15px]">品番</label>
          <input id="code" className={`mt-1.5 h-[21px] w-[86px] text-[13px] ${sunken}`} />
          {[["売上金額", "w"], ["卸値", "w"], ["在庫数", "n"], ["販売数", "n"], ["仕入数", "n"]].map(([l, k], i) => (
            <React.Fragment key={l}>
              <label htmlFor={`n-${i}`} className={i === 0 ? "mt-3 whitespace-nowrap pr-2" : "mt-1.5 pr-2"}>{l}</label>
              <input id={`n-${i}`} className={`mt-px h-[21px] shrink-0 text-[13px] ${k === "w" ? "w-[107px]" : "w-[86px]"} ${sunken}`} />
            </React.Fragment>
          ))}
          <Bevel className="mt-[7px] h-[29px] w-[79px] text-[13px] italic text-[#e60012]">項目クリア</Bevel>
          <div className="mt-[22px] flex flex-col gap-3.5 self-end pr-[3px] text-[17px]">
            <Bevel className="h-[29px] w-[79px]">記入</Bevel>
            <Bevel className="h-[29px] w-[79px]">終了</Bevel>
          </div>
        </div>
      </form>
    </div>
  );
}

export default function App() {
  return (
    <div lang="ja" className="relative flex h-screen min-h-[560px] flex-col overflow-hidden bg-[#f3f2f1] font-['Noto_Sans_CJK_JP',sans-serif]">
      <div className="flex shrink-0 flex-col [font-feature-settings:'palt']">
        <TitleBar />
        <TabStrip />
        <Ribbon />
      </div>
      <FormulaBar />
      <Sheet />
      <div className="flex shrink-0 flex-col [font-feature-settings:'palt']">
        <SheetTabs />
        <StatusBar />
        <Taskbar />
      </div>
      <EntryForm />
    </div>
  );
}
